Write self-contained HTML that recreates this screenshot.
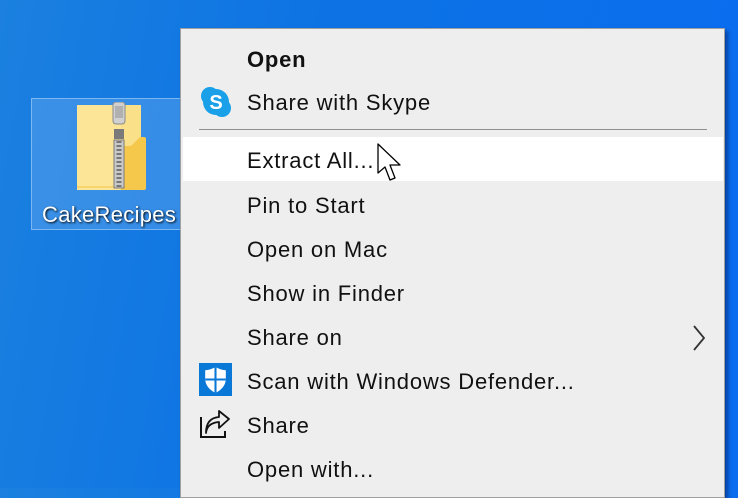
<!DOCTYPE html>
<html><head><meta charset="utf-8"><style>
html,body{margin:0;padding:0}
body{width:738px;height:488px;overflow:hidden;position:relative;background:linear-gradient(100deg,#1b80df 0%,#0d73e4 40%,#0a6cf0 100%);font-family:"Liberation Sans",sans-serif}
.sel{position:absolute;left:31px;top:98px;width:150px;height:132px;background:rgba(120,180,240,.35);border:1px solid rgba(170,210,250,.6);box-sizing:border-box}
.lbl{position:absolute;left:42px;top:202px;color:#fff;font-size:22px;letter-spacing:0.3px;text-shadow:1px 1px 2px #000}
.menu{position:absolute;left:180px;top:28px;width:545px;height:470px;background:#eeeeee;border:1px solid #a0a0a0;box-sizing:border-box;box-shadow:3px 3px 4px rgba(0,0,40,.4)}
.item{position:absolute;left:66px;font-size:22px;letter-spacing:0.8px;color:#111;line-height:26px}
.hl{position:absolute;left:2px;top:108px;width:540px;height:44px;background:#fff}
.sep{position:absolute;left:18px;top:100px;width:508px;height:1px;background:#909090}
</style></head><body>
<div class="sel"></div>
<svg style="position:absolute;left:77px;top:102px" width="70" height="90" viewBox="0 0 70 90">
<path d="M0 3 H64 V85 H0 Z" fill="#fbe08a"/>
<path d="M44 48 Q44 44 48 44 L52 44 Q55 44 57 41 L62 36 Q63 35 65 35 L67 35 Q69 35 69 37 V86 Q69 88 67 88 H44 Z" fill="#f5c84c"/>
<rect x="0" y="3" width="44" height="85" fill="#fce596"/>
<path d="M0 85 H44" stroke="#f2c24a"/>
<rect x="36" y="0" width="12" height="22" rx="3" fill="#d0d0d0" stroke="#8a8a8a"/>
<rect x="38" y="4" width="8" height="12" fill="#b0b0b0"/>
<rect x="37" y="27" width="10" height="10" fill="#7a7a7a"/>
<rect x="37" y="38" width="10" height="48" fill="#c9c9c9" stroke="#7a7a7a"/>
<path d="M42 39 V85" stroke="#777" stroke-width="5" stroke-dasharray="2 2"/>
</svg>
<div class="lbl">CakeRecipes</div>
<div class="menu">
<div class="sep"></div>
<div class="hl"></div>
<div class="item" style="top:18px;font-weight:bold">Open</div>
<svg style="position:absolute;left:19px;top:57px" width="32" height="32" viewBox="0 0 32 32"><circle cx="10" cy="10" r="9" fill="#1aa0e8"/><circle cx="22" cy="22" r="9" fill="#1aa0e8"/><circle cx="16" cy="16" r="13" fill="#1aa0e8"/><text x="16" y="23" text-anchor="middle" font-family="Liberation Sans" font-weight="bold" font-size="20" fill="#fff">S</text></svg>
<div class="item" style="top:61px">Share with Skype</div>
<div class="item" style="top:119px">Extract All...</div>
<div class="item" style="top:164px">Pin to Start</div>
<div class="item" style="top:208px">Open on Mac</div>
<div class="item" style="top:252px">Show in Finder</div>
<div class="item" style="top:296px">Share on</div>
<svg style="position:absolute;left:510px;top:295px" width="16" height="28"><path d="M3 2 L13 14 L3 26" fill="none" stroke="#333" stroke-width="1.8"/></svg>
<svg style="position:absolute;left:18px;top:334px" width="33" height="33" viewBox="0 0 32 32"><rect width="32" height="32" fill="#0a78d7"/><path d="M16 4 Q10 7 6 7 V15 Q6 24 16 29 Q26 24 26 15 V7 Q22 7 16 4Z" fill="#fff"/><path d="M16 4 V29 M6 16 H26" stroke="#0a78d7" stroke-width="2"/></svg>
<div class="item" style="top:340px">Scan with Windows Defender...</div>
<svg style="position:absolute;left:18px;top:380px" width="32" height="32" viewBox="0 0 32 32"><path d="M2 8 V28 H26 V22" fill="none" stroke="#111" stroke-width="2"/><path d="M7 24 Q8 14 20 13 V19 L30 10 L20 2 V8 Q7 9 7 24Z" fill="none" stroke="#111" stroke-width="1.8" stroke-linejoin="round"/></svg>
<div class="item" style="top:384px">Share</div>
<div class="item" style="top:428px">Open with...</div>
</div>
<svg style="position:absolute;left:377px;top:143px" width="28" height="42" viewBox="0 0 28 42"><path d="M1 1 V30 L8 24 L13 37 L18 35 L13 22 L23 22 Z" fill="#fff" stroke="#000" stroke-width="1.3" stroke-linejoin="round"/></svg>
</body></html>
